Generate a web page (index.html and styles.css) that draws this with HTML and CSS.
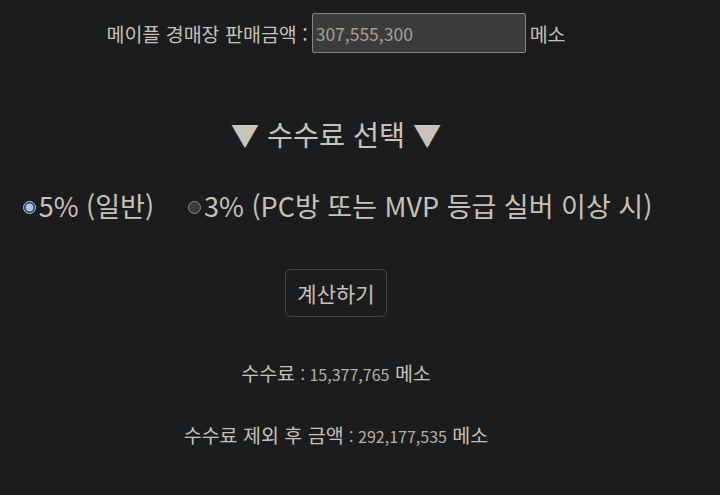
FILE: index.html
```html
<!DOCTYPE html>
<html lang="ko">
<head>
<meta charset="utf-8">
<title>메이플 경매장 수수료 계산기</title>
<link rel="stylesheet" href="styles.css">
</head>
<body>
<div class="page">
  <div class="amount-row">
    <label class="amount-label" for="price">메이플 경매장 판매금액 :</label>
    <input id="price" class="amount-input" type="text" value="307,555,300">
    <span class="unit">메소</span>
  </div>

  <h2 class="title">▼ 수수료 선택 ▼</h2>

  <div class="radio-row">
    <label class="radio-option"><input type="radio" name="fee" class="radio" checked>5% (일반)</label>
    <label class="radio-option"><input type="radio" name="fee" class="radio">3% (PC방 또는 MVP 등급 실버 이상 시)</label>
  </div>

  <div class="btn-row">
    <button class="calc-btn" type="button">계산하기</button>
  </div>

  <p class="result result-fee"><span class="result-label">수수료</span> <span class="result-value">: 15,377,765</span> 메소</p>
  <p class="result result-net"><span class="result-label">수수료 제외 후 금액</span> <span class="result-value">: 292,177,535</span> 메소</p>
</div>
</body>
</html>
```

FILE: styles.css
```css
html, body {
  background: #1b1c1e;
}
body {
  margin: 8px;
  color: #c9c1b5;
  font-family: "Noto Sans CJK KR", "Noto Sans", sans-serif;
  font-size: 19.5px;
}
.page {
  width: 656px;
  padding-top: 5px;
}
.amount-row {
  display: flex;
  justify-content: center;
  align-items: center;
  gap: 4px;
  height: 40px;
}
.amount-input {
  color-scheme: dark;
  box-sizing: border-box;
  width: 214px;
  height: 40px;
  margin: 0;
  padding: 0 3px;
  background: #3b3b3b;
  border: 1px solid #858585;
  border-radius: 2px;
  color: #a99f8f;
  font-family: inherit;
  font-size: 17.5px;
}
.title {
  margin: 61px 0 0;
  text-align: center;
  font-size: 28.3px;
  font-weight: 400;
  line-height: 40px;
  color: #cbc3b7;
}
.radio-row {
  margin-top: 32px;
  display: flex;
  justify-content: center;
  gap: 34px;
  font-size: 27px;
  line-height: 39px;
  padding-left: 3px;
}
.radio-option {
  display: flex;
  align-items: center;
}
.radio {
  color-scheme: dark;
  width: 13px;
  height: 13px;
  margin: 4px 3px 0 0;
}
.btn-row {
  margin-top: 44px;
  display: flex;
  justify-content: center;
}
.calc-btn {
  box-sizing: border-box;
  width: 102px;
  height: 48px;
  background: #1b1c1e;
  border: 1px solid #454545;
  border-radius: 6px;
  color: #c9c1b5;
  font-family: inherit;
  font-size: 21px;
  padding: 0;
}
.result {
  margin: 0;
  text-align: center;
  line-height: 26px;
}
.result-fee {
  margin-top: 43px;
}
.result-net {
  margin-top: 35px;
}
.result-value {
  font-size: 16px;
  color: #b9b0a2;
}
```
